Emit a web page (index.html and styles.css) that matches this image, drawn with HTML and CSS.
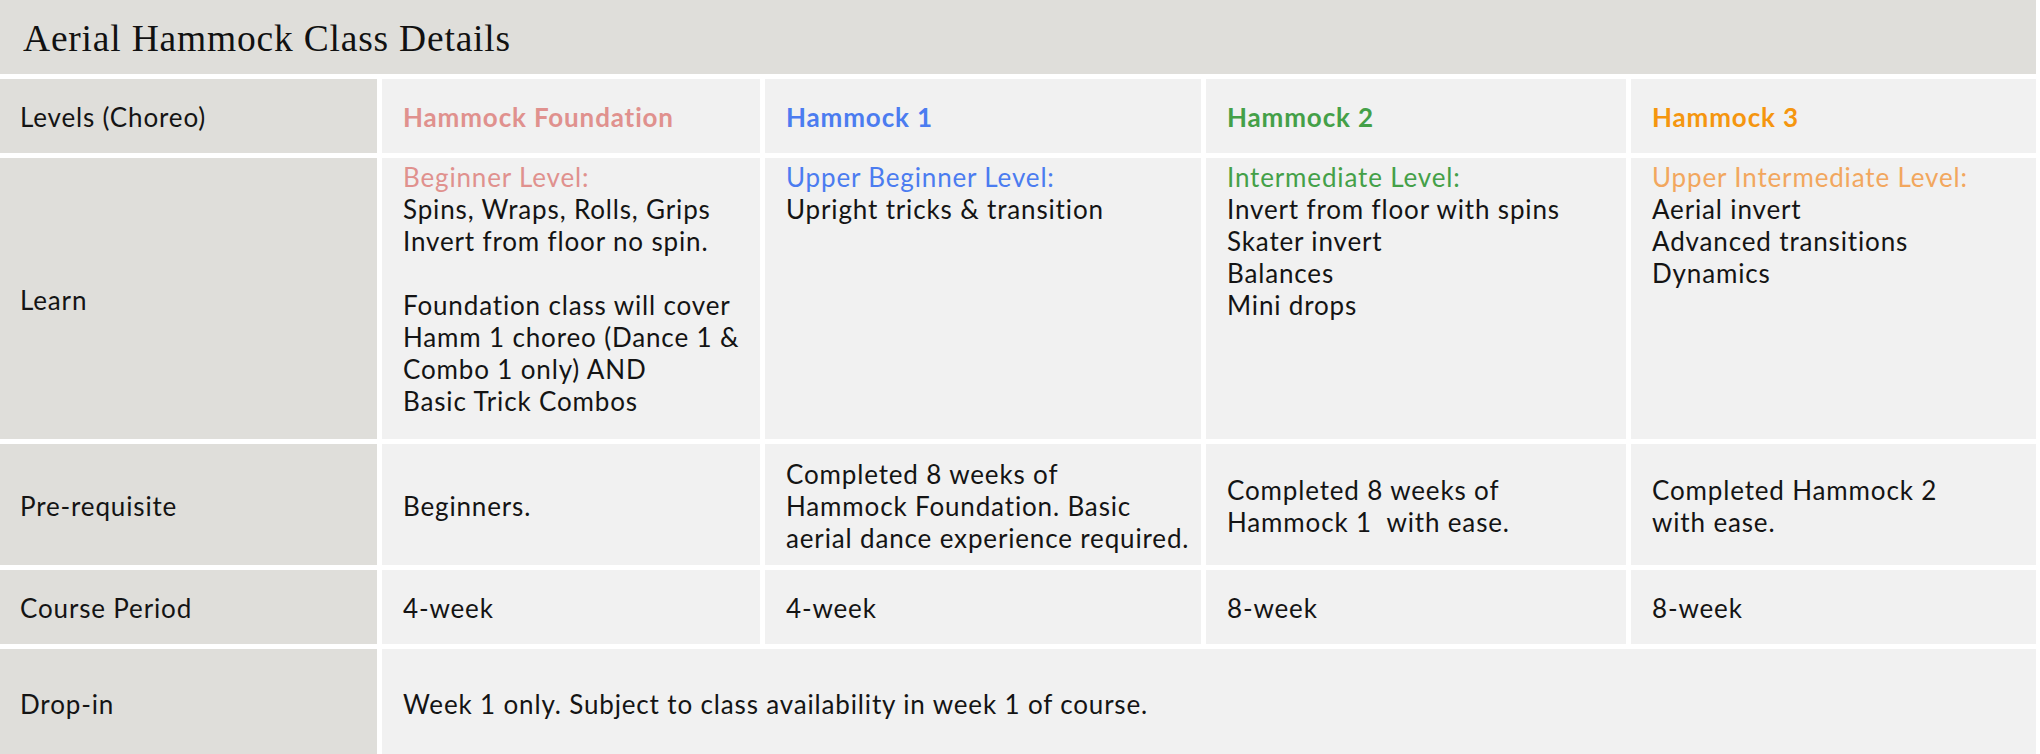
FILE: index.html
```html
<!DOCTYPE html>
<html lang="en">
<head>
<meta charset="utf-8">
<title>Aerial Hammock Class Details</title>
<link rel="stylesheet" href="styles.css">
</head>
<body>
<div class="page">
  <header class="title-bar"><h1 class="title">Aerial Hammock Class Details</h1></header>
  <div class="table">
    <div class="cell label">Levels (Choreo)</div>
    <div class="cell head c-found">Hammock Foundation</div>
    <div class="cell head c-h1">Hammock 1</div>
    <div class="cell head c-h2">Hammock 2</div>
    <div class="cell head c-h3">Hammock 3</div>

    <div class="cell label">Learn</div>
    <div class="cell learn"><span class="lvl c-found">Beginner Level:</span><br>Spins, Wraps, Rolls, Grips<br>Invert from floor no spin.<br><br>Foundation class will cover<br>Hamm 1 choreo (Dance 1 &amp;<br>Combo 1 only) AND<br>Basic Trick Combos</div>
    <div class="cell learn"><span class="lvl c-h1">Upper Beginner Level:</span><br>Upright tricks &amp; transition</div>
    <div class="cell learn"><span class="lvl c-h2">Intermediate Level:</span><br>Invert from floor with spins<br>Skater invert<br>Balances<br>Mini drops</div>
    <div class="cell learn"><span class="lvl c-h3l">Upper Intermediate Level:</span><br>Aerial invert<br>Advanced transitions<br>Dynamics</div>

    <div class="cell label">Pre-requisite</div>
    <div class="cell">Beginners.</div>
    <div class="cell">Completed 8 weeks of<br>Hammock Foundation. Basic<br>aerial dance experience required.</div>
    <div class="cell">Completed 8 weeks of<br>Hammock 1&nbsp; with ease.</div>
    <div class="cell">Completed Hammock 2<br>with ease.</div>

    <div class="cell label">Course Period</div>
    <div class="cell">4-week</div>
    <div class="cell">4-week</div>
    <div class="cell">8-week</div>
    <div class="cell">8-week</div>

    <div class="cell label">Drop-in</div>
    <div class="cell span4">Week 1 only. Subject to class availability in week 1 of course.</div>
  </div>
</div>
</body>
</html>
```
FILE: styles.css
```css
html, body {
  margin: 0;
  padding: 0;
  background: #ffffff;
  overflow: hidden;
}
.page {
  width: 2036px;
  font-family: "Lato", "Noto Sans", sans-serif;
  color: #141414;
}
.title-bar {
  height: 74px;
  background: #dfdeda;
  display: flex;
  align-items: center;
  padding-left: 23px;
  margin-bottom: 5px;
}
.title {
  margin: 0;
  font-family: "Liberation Serif", "DejaVu Serif", serif;
  font-weight: 400;
  font-size: 37.5px;
  color: #111;
  letter-spacing: 0.8px;
  padding-top: 2px;
}
.table {
  display: grid;
  grid-template-columns: 377px 378px 436px 420px 405px;
  grid-template-rows: 74px 281px 121px 74px 107px;
  gap: 5px;
}
.cell {
  background: #f1f1f1;
  display: flex;
  flex-direction: column;
  justify-content: center;
  padding: 2px 21px 0;
  font-size: 26px;
  line-height: 32px;
  letter-spacing: 0.85px;
  white-space: nowrap;
}
.cell.label {
  background: #dfdeda;
  padding-left: 20px;
}
.cell.head {
  font-weight: 700;
}
.cell.learn {
  display: block;
  padding-top: 3px;
}
.span4 {
  grid-column: 2 / span 4;
}
.c-found { color: #e0918e; }
.c-h1 { color: #4b7cf0; }
.c-h2 { color: #44a048; }
.c-h3 { color: #f5960f; }
.c-h3l { color: #f2a75e; }
.lvl { font-weight: 400; }
```
